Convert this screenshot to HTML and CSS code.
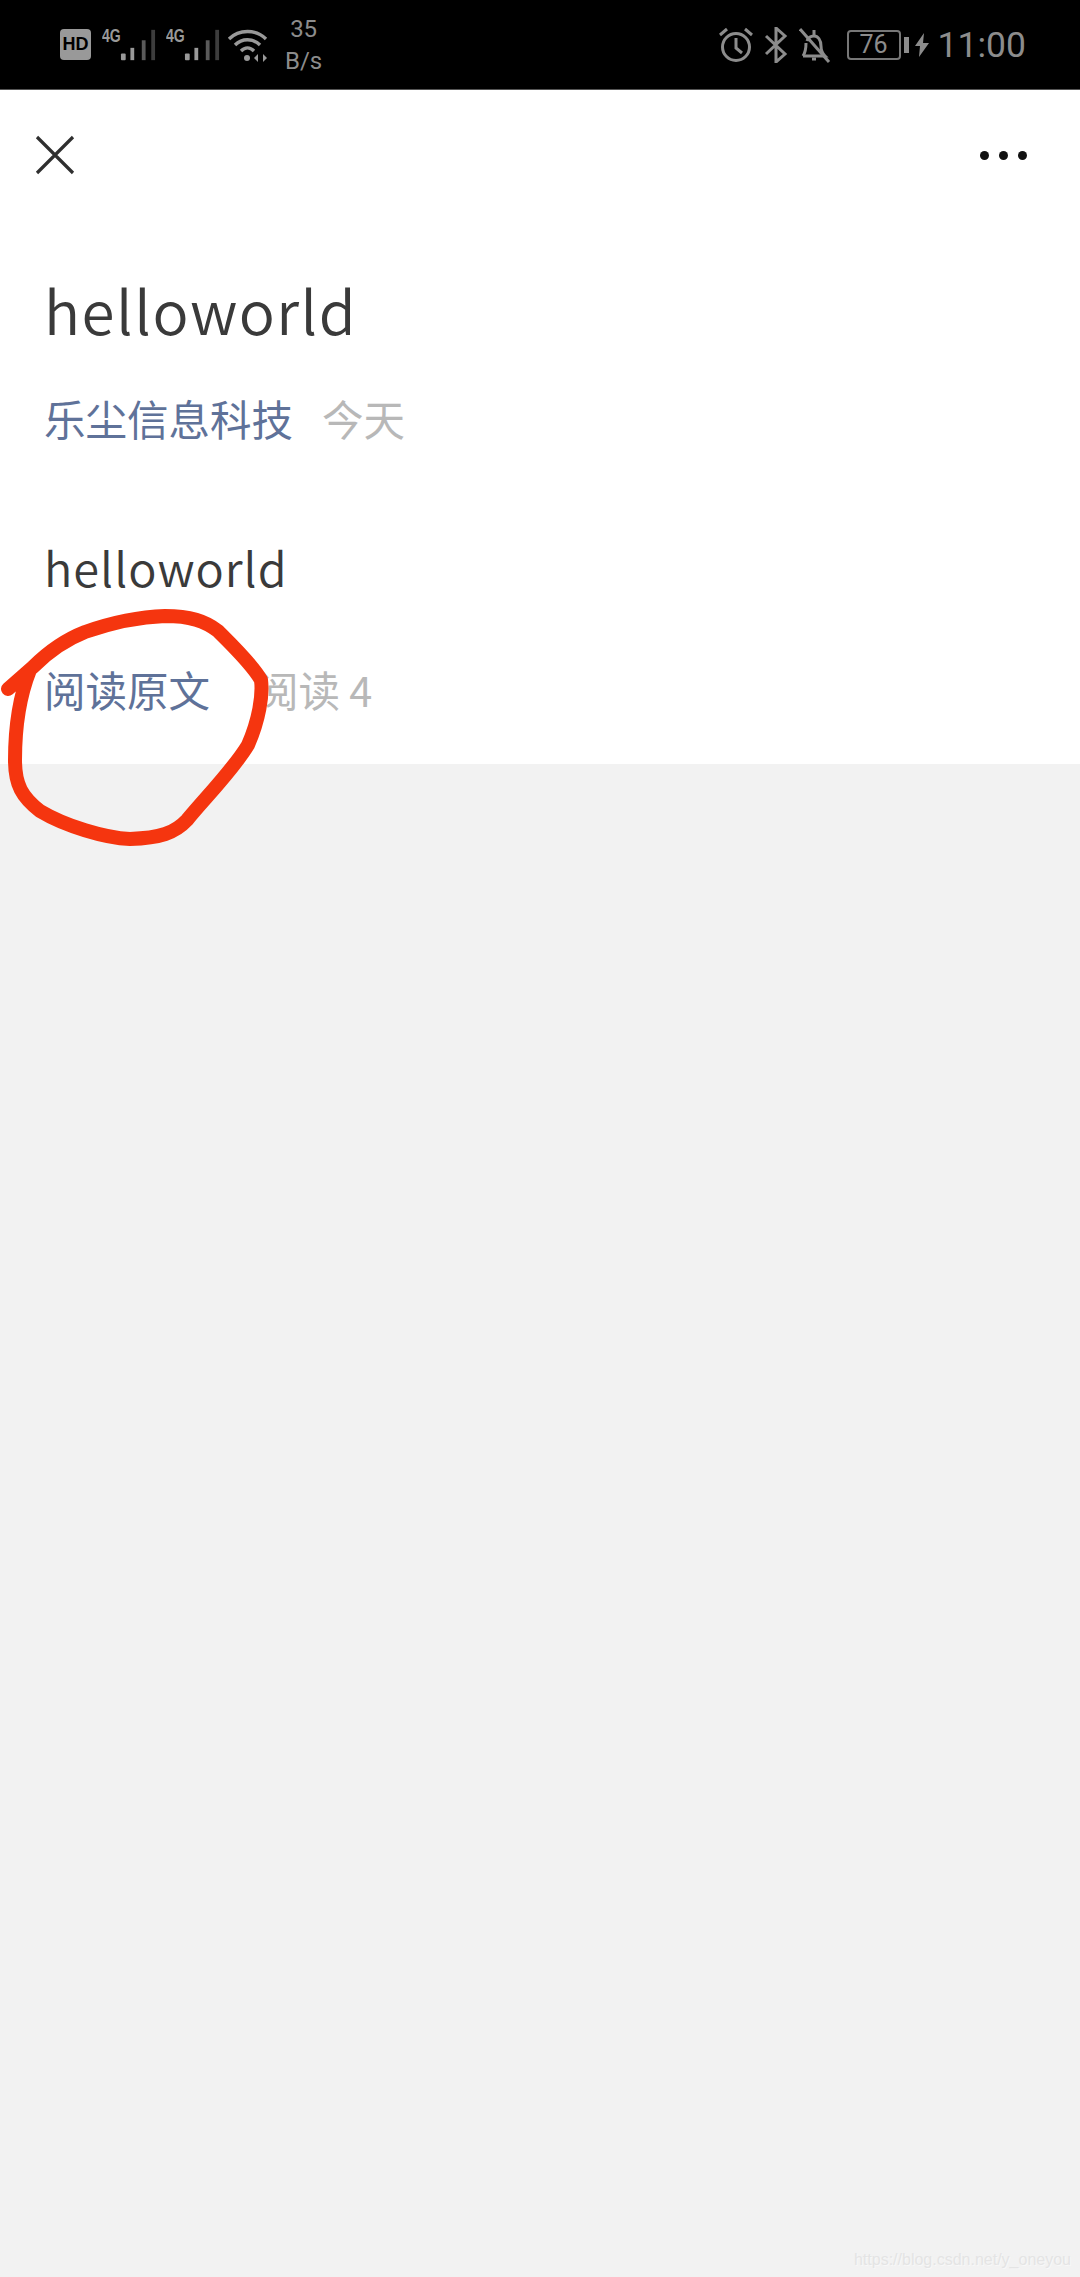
FILE: index.html
```html
<!DOCTYPE html>
<html lang="zh-CN">
<head>
  <meta charset="UTF-8" />
  <meta name="viewport" content="width=device-width, initial-scale=1.0"/>
  <title>helloworld</title>
  <link rel="stylesheet" href="styles.css">
</head>
<body>
  <div class="phone-container">

    <!-- Status bar -->
    <div class="status-bar">
      <div class="status-left">
        <span class="hd-badge">HD</span>
        <div class="signal">
          <span class="signal-label">4G</span>
          <svg class="signal-bars" width="38" height="34" viewBox="0 0 38 34">
            <rect x="1" y="26" width="5" height="7" rx="1" fill="#999"/>
            <rect x="11" y="20" width="4" height="13" fill="#999"/>
            <rect x="23" y="12" width="4" height="21" fill="#5a5a5a"/>
            <rect x="33" y="1" width="4" height="32" fill="#3d3d3d"/>
          </svg>
        </div>
        <div class="signal">
          <span class="signal-label">4G</span>
          <svg class="signal-bars" width="38" height="34" viewBox="0 0 38 34">
            <rect x="1" y="26" width="5" height="7" rx="1" fill="#999"/>
            <rect x="11" y="20" width="4" height="13" fill="#999"/>
            <rect x="23" y="12" width="4" height="21" fill="#5a5a5a"/>
            <rect x="33" y="1" width="4" height="32" fill="#3d3d3d"/>
          </svg>
        </div>
        <svg class="wifi" width="42" height="34" viewBox="0 0 42 34" fill="none" stroke="#999" stroke-width="3.4">
          <path d="M2 11C12 1 29 1 39 11"/>
          <path d="M8 17C15 10 26 10 33 17"/>
          <path d="M14 23C18 19 23 19 27 23"/>
          <circle cx="20" cy="30" r="3" fill="#999" stroke="none"/>
          <path d="M31 26l-4 4 4 4zM36 26l4 4-4 4z" fill="#999" stroke="none"/>
        </svg>
        <div class="net-speed">
          <span>35</span>
          <span>B/s</span>
        </div>
      </div>
      <div class="status-right">
        <svg width="36" height="36" viewBox="0 0 36 36" fill="none" stroke="#8c8c8c" stroke-width="3">
          <circle cx="18" cy="20" r="13.5"/>
          <path d="M18 11v10l6 5"/>
          <path d="M2 8l7-6M34 8l-7-6"/>
        </svg>
        <svg class="icon-bt" width="24" height="36" viewBox="0 0 24 36" fill="none" stroke="#8c8c8c" stroke-width="3">
          <path d="M2 9l19 18-9 8V1l9 8L2 27"/>
        </svg>
        <svg class="icon-bell" width="32" height="36" viewBox="0 0 32 36" fill="none" stroke="#8c8c8c" stroke-width="3">
          <path d="M4 29h22c-3-3-4-5-4-10 0-6-3-10-7-10s-6 2-7 5"/>
          <path d="M7 16c0 6-1 10-3 13"/>
          <path d="M15 3v5M13 32h4"/>
          <path d="M1 2l29 33"/>
        </svg>
        <div class="battery">
          <div class="battery-body">76</div>
          <div class="battery-nub"></div>
        </div>
        <svg class="icon-bolt" width="14" height="24" viewBox="0 0 14 24">
          <path d="M9 0L0 13h5l-1 11 10-14H8z" fill="#8c8c8c"/>
        </svg>
        <span class="clock">11:00</span>
      </div>
    </div>

    <!-- Article -->
    <div class="article">
      <div class="nav-bar">
        <svg width="40" height="40" viewBox="0 0 40 40" fill="none" stroke="#2f2f2f" stroke-width="3.2">
          <path d="M2 2l36 36M38 2L2 38"/>
        </svg>
        <div class="more-dots">
          <span></span><span></span><span></span>
        </div>
      </div>
      <h1 class="title">helloworld</h1>
      <div class="meta meta-top">
        <span class="link">乐尘信息科技</span>
        <span class="muted">今天</span>
      </div>
      <p class="body-text">helloworld</p>
      <div class="meta meta-bottom">
        <span class="link">阅读原文</span>
        <span class="muted">阅读 4</span>
      </div>
    </div>

    <!-- Red pen mark drawn over the screenshot -->
    <svg class="scribble" width="290" height="260" viewBox="0 600 290 260" fill="none" stroke="#f5350f" stroke-width="14" stroke-linecap="round" stroke-linejoin="round">
      <path d="M8 689L33 667C45 655 62 641 85 632C105 625 135 617 165 616C190 616 205 621 218 631C232 645 252 664 261 680C263 695 259 720 248 745C233 770 205 798 187 820C175 833 160 838 130 839C105 838 65 826 40 811C22 797 15 785 15 760C15 735 18 700 30 670"/>
    </svg>

    <div class="watermark">https://blog.csdn.net/y_oneyou</div>
  </div>
</body>
</html>
```

FILE: styles.css
```css
* {
  box-sizing: border-box;
}

body {
  margin: 0;
  padding: 0;
  font-family: "Noto Sans CJK SC", "Noto Sans", sans-serif;
  background-color: #f2f2f2;
}

.phone-container {
  width: 1080px;
  height: 2277px;
  position: relative;
  overflow: hidden;
  background-color: #f2f2f2;
}

.status-bar {
  height: 90px;
  background-color: #000;
  border-bottom: 1px solid #555;
  display: flex;
  justify-content: space-between;
  align-items: center;
  padding: 0 54px 0 60px;
  color: #8c8c8c;
}

.status-left,
.status-right {
  display: flex;
  align-items: center;
}

.hd-badge {
  width: 31px;
  height: 31px;
  border-radius: 4px;
  background-color: #999;
  color: #000;
  font-family: "Liberation Sans", sans-serif;
  font-weight: bold;
  font-size: 18px;
  line-height: 31px;
  text-align: center;
}

.signal {
  display: flex;
  align-items: flex-start;
  margin-left: 11px;
  width: 54px;
  height: 34px;
}

.signal + .signal {
  margin-left: 10px;
}

.signal-label {
  font-family: "Liberation Sans", sans-serif;
  font-weight: bold;
  font-size: 18px;
  line-height: 16px;
  color: #999;
  width: 18px;
  transform: scaleX(0.78);
  transform-origin: left;
}

.wifi {
  margin-left: 7px;
}

.net-speed {
  display: flex;
  flex-direction: column;
  align-items: center;
  margin-left: 16px;
  font-family: "Roboto", sans-serif;
  font-size: 24px;
  line-height: 32px;
  color: #8c8c8c;
}

.icon-bt {
  margin-left: 10px;
}

.icon-bell {
  margin-left: 11px;
}

.battery {
  display: flex;
  align-items: center;
  margin-left: 16px;
}

.battery-body {
  width: 54px;
  height: 30px;
  border: 2px solid #777;
  border-radius: 4px;
  font-family: "Roboto", sans-serif;
  font-size: 25px;
  line-height: 26px;
  text-align: center;
  color: #8c8c8c;
}

.battery-nub {
  width: 5px;
  height: 16px;
  margin-left: 3px;
  background-color: #8c8c8c;
}

.icon-bolt {
  margin-left: 6px;
}

.clock {
  margin-left: 9px;
  font-family: "Roboto", sans-serif;
  font-size: 35.5px;
  line-height: 40px;
}

.article {
  height: 674px;
  background-color: #fff;
  padding: 0 44px;
}

.nav-bar {
  height: 130px;
  margin: 0 -44px;
  padding: 0 53px 0 35px;
  display: flex;
  justify-content: space-between;
  align-items: center;
}

.more-dots {
  display: flex;
  gap: 10px;
}

.more-dots span {
  width: 9px;
  height: 9px;
  border-radius: 50%;
  background-color: #111;
}

.title {
  margin: 49px 0 0;
  font-size: 60px;
  font-weight: 350;
  line-height: 80px;
  letter-spacing: 1.5px;
  color: #3a3a3a;
}

.meta {
  display: flex;
  gap: 29px;
  font-size: 41.5px;
  line-height: 60px;
}

.meta-top {
  margin-top: 39px;
}

.meta-bottom {
  margin-top: 60px;
  gap: 47px;
}

.link {
  color: #5f7299;
}

.muted {
  color: #b8b8b8;
}

.body-text {
  margin: 87px 0 0;
  font-size: 47px;
  font-weight: 350;
  line-height: 64px;
  letter-spacing: 1px;
  color: #3a3a3a;
}

.scribble {
  position: absolute;
  left: 0;
  top: 600px;
}

.watermark {
  position: absolute;
  right: 9px;
  bottom: 8px;
  font-family: "Liberation Sans", sans-serif;
  font-size: 16px;
  color: #e4e4e4;
  text-shadow: 1px 1px 0 #f8f8f8;
}
```
